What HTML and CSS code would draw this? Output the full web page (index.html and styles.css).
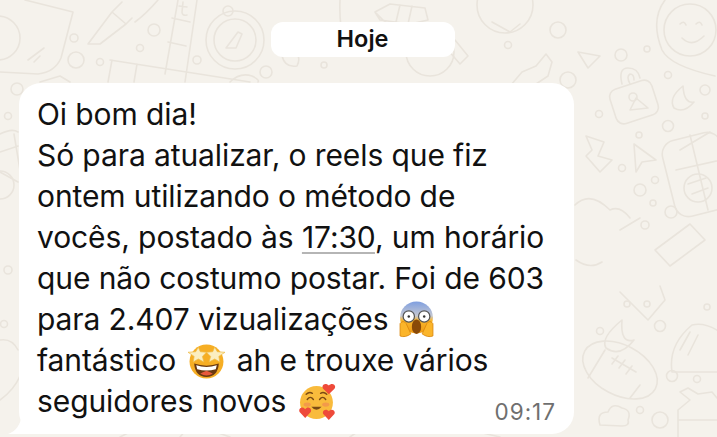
FILE: index.html
```html
<!DOCTYPE html>
<html lang="pt-BR">
  <head>
    <meta charset="UTF-8" />
    <title>Conversa</title>
    <link rel="stylesheet" href="styles.css">
  </head>
  <body>
    <svg class="wallpaper" viewBox="0 0 717 437" fill="none" stroke="#e9e4dc" stroke-width="1.6" stroke-linecap="round" stroke-linejoin="round">
      <!-- top left -->
      <circle cx="-2" cy="38" r="22"/><path d="M25 0 73 12 61 58Q55 72 38 74L0 72"/><path d="M28 60 44 48M34 62 40 56"/>
      <path d="M88 44 112 12 126 24 100 44ZM112 12 122 2M126 24 132 18M135 22Q146 14 158 0"/><circle cx="154" cy="30" r="6"/><circle cx="74" cy="38" r="4"/><circle cx="76" cy="60" r="8"/><circle cx="100" cy="62" r="3.5"/><circle cx="140" cy="48" r="3.5"/>
      <path d="M165 74 178 0M197 0 185 82M172 18 190 22M168 42 186 46M110 60 250 82M112 60 108 82M137 64 134 82M183 2 182 12Q182 16 187 15M179 6 187 7"/><circle cx="197" cy="60" r="4"/>
      <circle cx="235" cy="40" r="29"/><circle cx="235" cy="40" r="21"/><path d="M226 48 238 32 242 34 236 48Z"/><circle cx="228" cy="11" r="5"/><circle cx="266" cy="72" r="6"/><circle cx="324" cy="65" r="3"/>
      <path d="M340 0Q338 50 360 56M282 56Q285 68 297 66 300 60 298 56"/>
      <!-- top right -->
      <path d="M375 12 390 4 425 8 428 20 410 24 380 20ZM375 12 385 22M400 5 396 22M412 6 408 24"/>
      <circle cx="430" cy="52" r="24"/><path d="M448 50 460 64 468 56 455 40"/>
      <circle cx="505" cy="5" r="28"/><path d="M492 22 510 32 520 24"/><circle cx="558" cy="30" r="8"/><circle cx="508" cy="45" r="3.5"/>
      <path d="M505 92 522 72 536 66 546 54 552 62 548 76 530 88Z"/><circle cx="568" cy="80" r="8"/><path d="M578 52 600 56 588 68Z"/><circle cx="621" cy="55" r="6"/><circle cx="647" cy="49" r="3"/>
      <path d="M665 0Q650 20 662 50 670 66 715 76"/><circle cx="690" cy="30" r="26"/><path d="M680 24Q684 20 686 25M696 24Q700 20 702 25M682 38Q692 48 704 36"/>
      <rect x="612" y="84" width="44" height="36" rx="8" transform="rotate(-18 634 102)"/><path d="M622 84Q618 68 628 68 638 68 640 78M630 84Q626 76 630 74 634 74 634 80M630 110 636 98 648 108Z"/><circle cx="633" cy="97" r="4"/>
      <circle cx="599" cy="114" r="3.500"/><circle cx="668" cy="75" r="3.500"/><circle cx="705" cy="90" r="5"/><circle cx="668" cy="126" r="5.500"/><circle cx="639" cy="135" r="3"/><circle cx="705" cy="116" r="3"/>
      <path d="M683 86Q668 98 674 108 684 114 694 102 684 104 683 86Z"/>
      <!-- right side -->
      <path d="M586 136 604 142 598 156 612 160 600 172 586 156 592 150Z"/><path d="M634 144 656 160 642 162 636 172Z"/><circle cx="622" cy="168" r="3.500"/>
      <rect x="668" y="135" width="60" height="78" rx="14" transform="rotate(-14 700 175)"/><path d="M680 150 710 132M690 135 708 210M676 170 730 158"/><circle cx="698" cy="188" r="14"/><path d="M688 184 706 178M692 194 708 188"/>
      <circle cx="640" cy="190" r="6"/><circle cx="655" cy="180" r="3.500"/><circle cx="653" cy="203" r="3"/><circle cx="671" cy="212" r="6"/>
      <path d="M575 205Q590 190 610 210 620 205 630 218M576 260Q590 270 602 262"/><circle cx="645" cy="225" r="4"/>
      <path d="M655 250 690 224 705 240 670 266ZM620 230 640 218"/><path d="M620 292 648 320 665 300 660 286"/><circle cx="627" cy="304" r="3"/><circle cx="647" cy="304" r="3"/><circle cx="707" cy="307" r="3"/>
      <path d="M622 320Q600 338 606 348 620 358 634 340 620 344 622 320Z"/><circle cx="600" cy="331" r="3.500"/><circle cx="660" cy="326" r="5.500"/>
      <ellipse cx="620" cy="370" rx="40" ry="25" transform="rotate(28 620 370)"/><path d="M605 350 588 378M640 385 630 398M612 358 636 372M618 356 612 364M625 360 619 368M632 366 626 374"/>
      <path d="M672 372Q668 345 692 325 705 322 720 332M672 372 717 372M680 350 690 332M688 355 698 335"/>
      <circle cx="672" cy="376" r="5.500"/><circle cx="697" cy="379" r="3.500"/><circle cx="640" cy="410" r="3.500"/><circle cx="660" cy="420" r="8"/>
      <path d="M600 425Q596 412 608 412 612 402 622 408 632 410 628 420 630 426 622 426Z"/>
      <path d="M678 437 678 410 690 400 680 392 688 388 698 394 712 392 717 398M678 420 717 420"/>
      <!-- left side -->
      <circle cx="17" cy="89" r="6"/><circle cx="8" cy="116" r="3.500"/><path d="M0 134Q12 128 18 132M0 152 18 146M14 134 20 170M0 172 18 182"/><circle cx="0" cy="185" r="14"/>
      <circle cx="4" cy="324" r="3.500"/><path d="M0 340Q12 338 18 350M0 400Q14 390 20 376"/><circle cx="8" cy="270" r="4"/>
      <path d="M40 82 60 76 70 82M230 82Q240 72 252 76 260 80 258 82"/>
      <path d="M120 437 130 432M180 437 186 430M210 430 230 437M350 437 360 430M470 430 500 437"/>
    </svg>

    <main class="conversa">
      <div class="dato">Hoje</div>

      <article class="besked">
        <svg class="hale" viewBox="0 0 34 20"><path d="M34 0V20H0Q12 16 14 0Z"/></svg>
        <p class="tekst">
          Oi bom dia!<br>
          Só para atualizar, o reels que fiz<br>
          ontem utilizando o método de<br>
          vocês, postado às <span class="tid-link">17:30</span>, um horário<br>
          que não costumo postar. Foi de 603<br>
          para 2.407 vizualizações
          <svg class="emoji skrig" viewBox="0 0 36 36" role="img" aria-label="😱">
            <defs>
              <linearGradient id="skrig" x1="0" y1="0" x2="0" y2="1">
                <stop offset="0" stop-color="#7f9fe0"/>
                <stop offset="0.45" stop-color="#c5c8d2"/>
                <stop offset="0.6" stop-color="#f8b52c"/>
                <stop offset="1" stop-color="#ef9a12"/>
              </linearGradient>
            </defs>
            <ellipse cx="18" cy="16" rx="16" ry="15.500" fill="url(#skrig)"/>
            <circle cx="10.500" cy="15" r="5.500" fill="#fff" stroke="#555" stroke-width="1.200"/>
            <circle cx="25.500" cy="15" r="5.500" fill="#fff" stroke="#555" stroke-width="1.200"/>
            <circle cx="10.500" cy="15" r="1.200" fill="#333"/>
            <circle cx="25.500" cy="15" r="1.200" fill="#333"/>
            <ellipse cx="18" cy="25" rx="4.500" ry="7" fill="#8a4a08"/>
            <path d="M2 34 2 22Q5 18 8 22L12.500 32Q7 36 2 34ZM34 34 34 22Q31 18 28 22L23.500 32Q29 36 34 34Z" fill="#fbb52a" stroke="#d9860c" stroke-width=".8"/>
          </svg><br>
          fantástico
          <svg class="emoji" viewBox="0 0 36 36" role="img" aria-label="🤩">
            <circle cx="18" cy="19" r="16.500" fill="#f6ae24"/>
            <path d="M6 21Q18 25 30 21 29 34 18 34 7 34 6 21Z" fill="#6b3a10"/>
            <path d="M8 22.500Q18 26 28 22.500L27 26.500Q18 29 9 26.500Z" fill="#fff"/>
            <path d="M18 28 Q13 30 12 31Q18 34 24 31Q23 30 18 28Z" fill="#e8583a"/>
            <path d="M10 5 12 9.500 18 10 14 14 15.500 19.500 10 16.500 5 19.500 6 14 0 10 7.500 9.500Z" fill="#fbeec0" stroke="#eebc4a" stroke-width=".7"/>
            <path d="M26 5 28.500 9.500 36 10 30 14 31 19.500 26 16.500 20.500 19.500 22 14 18 10 24 9.500Z" fill="#fbeec0" stroke="#eebc4a" stroke-width=".7"/>
          </svg>
          ah e trouxe vários<br>
          seguidores novos
          <svg class="emoji" viewBox="0 0 36 36" role="img" aria-label="🥰">
            <circle cx="17" cy="19" r="16" fill="#f9bb3c"/>
            <path d="M8 16Q11 12 14 16M20 16Q23 12 26 16M7 11Q10 8 13 10M21 10Q24 8 27 11" fill="none" stroke="#7a4a14" stroke-width="1.400" stroke-linecap="round"/>
            <path d="M12 23Q17 29 22 23Z" fill="#7a4a14"/>
            <ellipse cx="8" cy="21" rx="3.500" ry="2" fill="#f39a4a"/>
            <ellipse cx="26" cy="21" rx="3.500" ry="2" fill="#f39a4a"/>
            <path d="M29 11 23.500 5.500C21 2 26 -1 29 2.500 32 -1 37 2 34.500 5.500Z" fill="#ee4a3a"/>
            <path d="M6 34 .8 28.500C-1.500 25 3.500 22 6 25.500 8.500 22 13.500 25 11.200 28.500Z" fill="#ee4a3a"/>
            <path d="M29 36 23.800 30.500C21.500 27 26.500 24 29 27.500 31.500 24 36.500 27 34.200 30.500Z" fill="#ee4a3a"/>
          </svg>
        </p>
        <time class="tid">09:17</time>
      </article>
    </main>
  </body>
</html>
```

FILE: styles.css
```css
* {
  box-sizing: border-box;
}
html, body {
  margin: 0;
  height: 100%;
}
body {
  position: relative;
  overflow: hidden;
  background-color: #f5f2ec;
  font-family: "Inter", "Liberation Sans", sans-serif;
  color: #111;
}

.wallpaper {
  position: absolute;
  left: 0;
  top: 0;
  width: 717px;
  height: 437px;
}

.conversa {
  position: relative;
  display: flex;
  flex-direction: column;
  padding: 22px 143px 0 19px;
}

.dato {
  align-self: center;
  width: 184px;
  height: 35px;
  margin-left: 132px;
  border-radius: 12px;
  background-color: #fff;
  font-size: 23.500px;
  font-weight: 600;
  line-height: 34px;
  text-align: center;
}

.besked {
  position: relative;
  height: 351px;
  margin-top: 26px;
  padding: 11px 18px 0 18px;
  border-radius: 22px;
  background-color: #fff;
}
.hale {
  position: absolute;
  left: -11px;
  bottom: 0;
  width: 34px;
  height: 20px;
  fill: #fff;
}

.tekst {
  margin: 0;
  font-size: 30px;
  letter-spacing: -0.1px;
  line-height: 41px;
  white-space: nowrap;
}
.tid-link {
  text-decoration: underline;
  text-decoration-thickness: 2px;
  text-underline-offset: 4px;
  text-decoration-color: #b5b5b5;
}
.emoji {
  display: inline-block;
  width: 37px;
  height: 37px;
  margin: 0 3px 0 4px;
  vertical-align: -8px;
}
.skrig {
  margin-left: 1px;
}

.tid {
  position: absolute;
  right: 18px;
  bottom: 9px;
  font-size: 22.500px;
  letter-spacing: 1px;
  color: #6f6f6f;
}
```
